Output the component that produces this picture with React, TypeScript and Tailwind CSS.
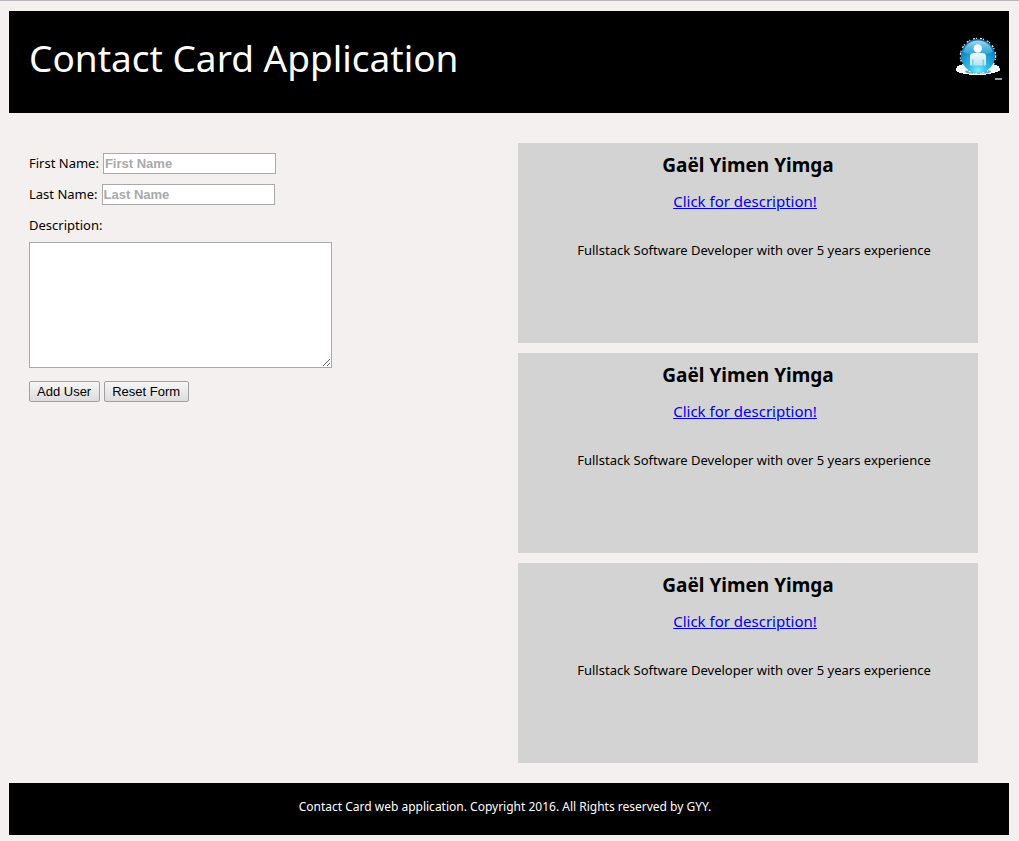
import React, { useState } from "react";

type Contact = { id: number; name: string; description: string };

const contacts: Contact[] = [1, 2, 3].map((id) => ({
  id,
  name: "Gaël Yimen Yimga",
  description: "Fullstack Software Developer with over 5 years experience",
}));

function UserLogo() {
  return (
    <svg width="48" height="46" viewBox="0 0 48 46" role="img" aria-label="User">
      <defs>
        <radialGradient id="ball" cx="50%" cy="92%" r="90%">
          <stop offset="0" stopColor="#7deefc" />
          <stop offset="0.3" stopColor="#2fbbe4" />
          <stop offset="0.65" stopColor="#1592cb" />
          <stop offset="1" stopColor="#0f6ca5" />
        </radialGradient>
        <linearGradient id="gloss" x1="0" y1="0" x2="0" y2="1">
          <stop offset="0" stopColor="#9edcf3" />
          <stop offset="1" stopColor="#3cb2e0" stopOpacity="0.6" />
        </linearGradient>
        <linearGradient id="body" x1="0" y1="0" x2="0" y2="1">
          <stop offset="0" stopColor="#f4fbff" />
          <stop offset="1" stopColor="#b9e1f3" />
        </linearGradient>
      </defs>
      <path
        d="M1 33h1v-2h2v-1h3v-1h32v1h3v1h2v2h1v3h-2v1h-3v1h-4v1h-5v1H14v-1H8v-1H4v-1H2v-1H1z"
        fill="#f6f9fa"
      />
      <ellipse cx="23" cy="36.500" rx="13" ry="2.500" fill="#6fa9bd" />
      <circle cx="23" cy="21" r="17.500" fill="none" stroke="#eaf7fc" strokeWidth="1.500" strokeDasharray="2 1 1 3" />
      <circle cx="23" cy="21" r="17" fill="url(#ball)" />
      <path d="M8.500 17C10 9.500 16 5.500 23 5.500S36 9.500 37.500 17C31 20.500 15 20.500 8.500 17z" fill="url(#gloss)" />
      <circle cx="22.800" cy="13.500" r="4.200" fill="#ffffff" />
      <path
        d="M15 30.500V21.500q0-3.500 4-3.500h8q4 0 4 3.500v9h-2.500v-6h-.8v6h-9.400v-6h-.8v6z"
        fill="url(#body)"
      />
      <path d="M40 44h7" stroke="#cfcfcf" strokeWidth="1.500" />
    </svg>
  );
}

function ContactCard({ contact }: { contact: Contact }) {
  const [open, setOpen] = useState(true);
  return (
    <article className="h-[200px] bg-[#d3d3d3] pt-2.5 text-center">
      <h2 className="text-[19px] leading-6 font-bold">{contact.name}</h2>
      <p className="mt-3 pr-1.5 text-[15px] leading-6">
        <a
          href="#description"
          className="text-[#0000ee] underline"
          onClick={(e) => {
            e.preventDefault();
            setOpen(!open);
          }}
        >
          Click for description!
        </a>
      </p>
      {open && <p className="mt-7 pl-3 text-[13px] leading-[18px]">{contact.description}</p>}
    </article>
  );
}

const inputClass =
  "h-[21px] w-[173px] border border-[#a9a9a9] bg-white px-px font-['Liberation_Sans',Arial,sans-serif] text-[13px] font-bold placeholder:text-[#a9a9a9]";
const buttonClass =
  "h-[21px] rounded-xs border border-[#a0a0a0] bg-linear-to-b from-[#f6f6f6] to-[#dddddd] pr-2 pl-[7px] font-['Liberation_Sans',Arial,sans-serif] text-[13px] leading-[19px]";

export default function App() {
  return (
    <div className="border-t border-[#bab5ba] bg-[#f4f0ef] px-2.5 pt-2.5 pb-1.5 pl-[9px] font-['Noto_Sans',sans-serif] text-black">
      <header className="flex h-[102px] items-start justify-between bg-black pt-6 pr-1.5 pl-5 text-white">
        <h1 className="text-[37px] leading-[46px]">Contact Card Application</h1>
        <UserLogo />
      </header>

      <main className="grid grid-cols-2 pt-[30px] pb-5">
        <form className="pt-2.5 pl-5 text-[13px] leading-5" onSubmit={(e) => e.preventDefault()}>
          <div className="flex items-start gap-1">
            <label htmlFor="first">First Name:</label>
            <input id="first" type="text" placeholder="First Name" className={inputClass} />
          </div>
          <div className="mt-2.5 flex items-start gap-1">
            <label htmlFor="last">Last Name:</label>
            <input id="last" type="text" placeholder="Last Name" className={inputClass} />
          </div>
          <label htmlFor="description" className="mt-2.5 block">
            Description:
          </label>
          <textarea
            id="description"
            className="mt-[7px] block h-[126px] w-[303px] resize border border-[#a9a9a9] bg-white p-0.5"
          />
          <div className="mt-[13px] flex gap-1">
            <button type="submit" className={buttonClass}>
              Add User
            </button>
            <button type="reset" className={buttonClass}>
              Reset Form
            </button>
          </div>
        </form>

        <section className="flex flex-col gap-2.5 pr-[31px] pl-[9px]">
          {contacts.map((c) => (
            <ContactCard key={c.id} contact={c} />
          ))}
        </section>
      </main>

      <footer className="h-[52px] bg-black pt-[15px] pr-2 text-center text-xs leading-[18px] text-white">
        Contact Card web application. Copyright 2016. All Rights reserved by GYY.
      </footer>
    </div>
  );
}
